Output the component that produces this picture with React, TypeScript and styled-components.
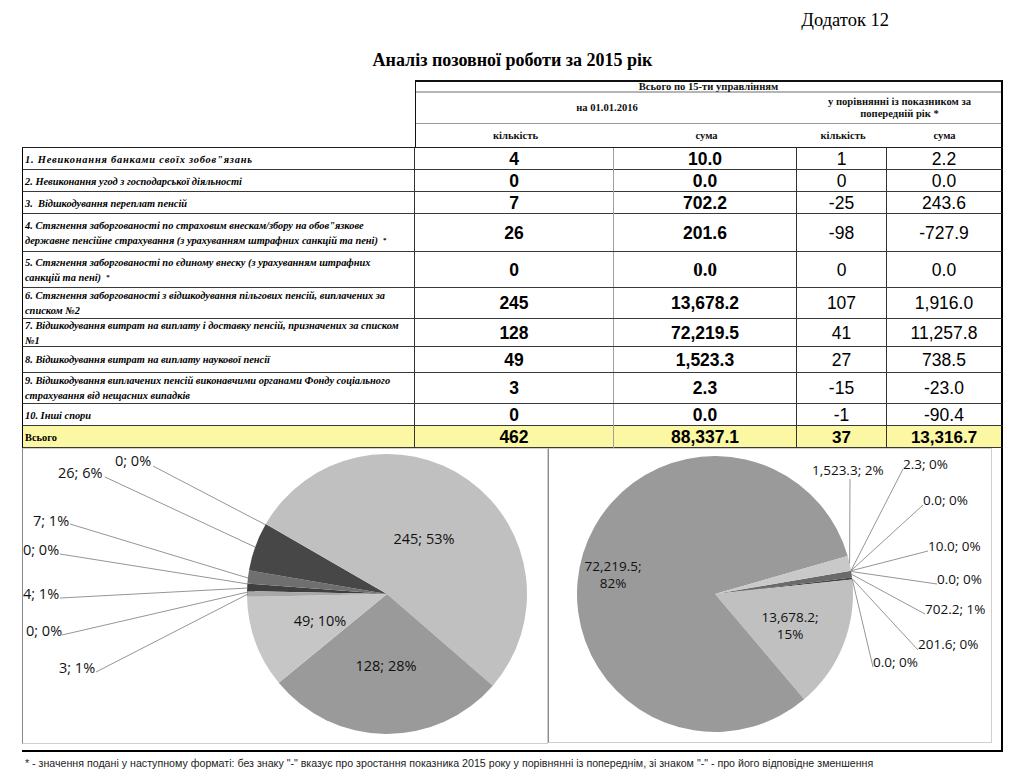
import React from 'react';
import styled, { createGlobalStyle } from 'styled-components';

const GlobalStyle = createGlobalStyle`
  html, body { margin: 0; padding: 0; background: #fff; }
  body { width: 1024px; height: 784px; overflow: hidden; }
`;

const COLS = '392px 199px 183px 90px 114px';

const Page = styled.div`
  width: 1024px;
  height: 784px;
  box-sizing: border-box;
  padding: 0 21px 0 22px;
  display: flex;
  flex-direction: column;
  font-family: "Liberation Serif", "Times New Roman", serif;
  color: #000;
`;

const Appendix = styled.div`
  display: flex;
  justify-content: flex-end;
  padding-right: 114px;
  margin-top: 10px;
  font-size: 18.5px;
  line-height: 20px;
  height: 20px;
`;

const Title = styled.h1`
  margin: 20px 0 0;
  text-align: center;
  font-size: 18px;
  line-height: 20px;
  height: 20px;
  font-weight: bold;
`;

const HeaderWrap = styled.div`
  margin-top: 10px;
  display: flex;
  height: 67px;
`;

const HeaderSpacer = styled.div`
  width: 393px;
  flex: none;
`;

const HeaderBox = styled.div`
  flex: 1;
  box-sizing: border-box;
  border-top: 2px solid #111;
  border-left: 1px solid #111;
  border-right: 2px solid #000;
  display: flex;
  flex-direction: column;
  font-weight: bold;
  font-size: 10.6px;
  color: #111;
`;

const HeadTop = styled.div`
  height: 11px;
  box-sizing: border-box;
  border-bottom: 2px solid #b5b5b5;
  display: flex;
  align-items: center;
  justify-content: center;
  line-height: 10px;
`;

const HeadGrid = styled.div<{ $h: number; $cols: string; $line?: boolean }>`
  height: ${(p) => p.$h}px;
  box-sizing: border-box;
  display: grid;
  grid-template-columns: ${(p) => p.$cols};
  border-bottom: ${(p) => (p.$line ? '1px solid #9a9a9a' : 'none')};
`;

const HeadCell = styled.div`
  display: flex;
  align-items: center;
  justify-content: center;
  text-align: center;
  line-height: 12px;
`;

const Body = styled.div`
  border-top: 1px solid #222;
  display: flex;
  flex-direction: column;
`;

const Row = styled.div<{ $h: number; $total?: boolean }>`
  display: grid;
  grid-template-columns: ${COLS};
  height: ${(p) => p.$h}px;
  box-sizing: border-box;
  border-left: 1px solid #000;
  border-right: 2px solid #000;
  border-bottom: 1px solid #3a3a3a;
  background: ${(p) => (p.$total ? '#fbf7a2' : '#fff')};
`;

const LabelCell = styled.div<{ $total?: boolean; $spread?: number }>`
  box-sizing: border-box;
  border-right: 1px solid #333;
  padding-left: 2px;
  display: flex;
  flex-direction: column;
  justify-content: center;
  font-weight: bold;
  font-style: ${(p) => (p.$total ? 'normal' : 'italic')};
  font-size: 10.4px;
  letter-spacing: ${(p) => p.$spread ?? 0}px;
  line-height: 15px;
  white-space: pre;
  overflow: hidden;
`;

const LabelLine = styled.span`
  display: block;
  align-self: flex-start;
`;

const NumCell = styled.div<{ $bold?: boolean; $size: number; $serif?: boolean; $line: string }>`
  box-sizing: border-box;
  border-right: ${(p) => p.$line};
  display: flex;
  align-items: center;
  justify-content: center;
  font-family: ${(p) =>
    p.$serif ? '"Liberation Serif", "Times New Roman", serif' : '"Liberation Sans", Arial, sans-serif'};
  font-weight: ${(p) => (p.$bold ? 'bold' : 'normal')};
  font-size: ${(p) => p.$size}px;
  padding-top: 1px;
`;

const Sup = styled.span`
  font-size: 7px;
  line-height: 7px;
  vertical-align: 2px;
  font-style: normal;
`;

const ChartsFrame = styled.div`
  display: flex;
  align-items: flex-start;
  height: 304px;
  box-sizing: border-box;
  border-right: 2px solid #000;
  border-bottom: 2px solid #000;
`;

const ChartBox = styled.div<{ $w: number; $h: number; $edge: string }>`
  width: ${(p) => p.$w}px;
  height: ${(p) => p.$h}px;
  flex: none;
  box-sizing: border-box;
  border: 1px solid #cfcfcf;
  border-left: 1px solid ${(p) => p.$edge};
  background: #fff;
  overflow: hidden;
  & > svg { display: block; }
`;

const Footer = styled.div`
  margin-top: 4px;
  padding-left: 3px;
  font-family: "Liberation Sans", Arial, sans-serif;
  font-size: 10.65px;
  line-height: 14px;
  color: #222;
  white-space: nowrap;
`;

type RowData = {
  lines: string[];
  star?: boolean;
  h: number;
  a: string;
  b: string;
  c: string;
  d: string;
  serifB?: boolean;
  total?: boolean;
  spread?: number;
};

const rows: RowData[] = [
  { lines: ['1. Невиконання банками своїх зобов"язань'], h: 22, a: '4', b: '10.0', c: '1', d: '2.2', spread: 0.8 },
  { lines: ['2. Невиконання угод з господарської діяльності'], h: 22, a: '0', b: '0.0', c: '0', d: '0.0' },
  { lines: ['3.  Відшкодування переплат пенсій'], h: 22, a: '7', b: '702.2', c: '-25', d: '243.6' },
  {
    lines: [
      '4. Стягнення заборгованості по страховим внескам/збору на обов"язкове',
      'державне пенсійне страхування (з урахуванням штрафних санкцій та пені)  ',
    ],
    star: true,
    h: 38,
    a: '26',
    b: '201.6',
    c: '-98',
    d: '-727.9',
  },
  {
    lines: ['5. Стягнення заборгованості по єдиному внеску (з урахуванням штрафних', 'санкцій та пені)  '],
    star: true,
    h: 36,
    a: '0',
    b: '0.0',
    c: '0',
    d: '0.0',
    serifB: true,
  },
  {
    lines: ['6. Стягнення заборгованості з відшкодування пільгових пенсій, виплачених за', 'списком №2'],
    h: 31,
    a: '245',
    b: '13,678.2',
    c: '107',
    d: '1,916.0',
  },
  {
    lines: ['7. Відшкодування витрат на виплату і доставку пенсій, призначених за списком', '№1'],
    h: 28,
    a: '128',
    b: '72,219.5',
    c: '41',
    d: '11,257.8',
  },
  { lines: ['8. Відшкодування витрат на виплату наукової пенсії'], h: 26, a: '49', b: '1,523.3', c: '27', d: '738.5' },
  {
    lines: ['9. Відшкодування виплачених пенсій виконавчими органами Фонду соціального', 'страхування від нещасних випадків'],
    h: 31,
    a: '3',
    b: '2.3',
    c: '-15',
    d: '-23.0',
  },
  { lines: ['10. Інші спори'], h: 22, a: '0', b: '0.0', c: '-1', d: '-90.4' },
  { lines: ['Всього'], h: 22, a: '462', b: '88,337.1', c: '37', d: '13,316.7', total: true },
];

/* ---------- pie charts ---------- */

const rad = (d: number) => (d * Math.PI) / 180;

function slicePath(cx: number, cy: number, r: number, a0: number, a1: number) {
  const x0 = cx + r * Math.cos(rad(a0));
  const y0 = cy + r * Math.sin(rad(a0));
  const x1 = cx + r * Math.cos(rad(a1));
  const y1 = cy + r * Math.sin(rad(a1));
  const large = a1 - a0 > 180 ? 1 : 0;
  return `M ${cx} ${cy} L ${x0.toFixed(2)} ${y0.toFixed(2)} A ${r} ${r} 0 ${large} 1 ${x1.toFixed(2)} ${y1.toFixed(2)} Z`;
}

type Label = { t: string[]; x: number; y: number; anchor?: 'start' | 'middle'; line?: [number, number, number, number] };

type PieProps = {
  w: number;
  h: number;
  ox: number;
  oy: number;
  cx: number;
  cy: number;
  r: number;
  start: number;
  values: number[];
  colors: string[];
  labels: Label[];
  fontSize: number;
};

const Pie: React.FC<PieProps> = ({ w, h, ox, oy, cx, cy, r, start, values, colors, labels, fontSize }) => {
  const total = values.reduce((s, v) => s + v, 0);
  let a = start;
  const slices = values.map((v, i) => {
    const sweep = (v / total) * 360;
    const a0 = a;
    a += sweep;
    if (v <= 0) return null;
    return <path key={i} d={slicePath(cx, cy, r, a0, a0 + sweep)} fill={colors[i]} />;
  });
  return (
    <svg width={w} height={h} viewBox={`${ox} ${oy} ${w} ${h}`}>
      {slices}
      {labels.map((l, i) =>
        l.line ? (
          <line key={'l' + i} x1={l.line[0]} y1={l.line[1]} x2={l.line[2]} y2={l.line[3]} stroke="#7a7a7a" strokeWidth={0.8} />
        ) : null
      )}
      {labels.map((l, i) => (
        <text
          key={'t' + i}
          x={l.x}
          y={l.y}
          textAnchor={l.anchor || 'start'}
          fontFamily='"Open Sans", "Noto Sans", sans-serif'
          fontSize={fontSize}
          fill="#111"
        >
          {l.t.map((s, j) => (
            <tspan key={j} x={l.x} y={l.y + j * 17} dominantBaseline="central">
              {s}
            </tspan>
          ))}
        </text>
      ))}
    </svg>
  );
};

const leftLabels: Label[] = [
  { t: ['245; 53%'], x: 424, y: 537, anchor: 'middle' },
  { t: ['49; 10%'], x: 320, y: 619, anchor: 'middle' },
  { t: ['128; 28%'], x: 386, y: 664, anchor: 'middle' },
  { t: ['0; 0%'], x: 115, y: 459, line: [153, 465, 266, 524] },
  { t: ['26; 6%'], x: 58, y: 471, line: [105, 476, 255, 546] },
  { t: ['7; 1%'], x: 33, y: 519, line: [70, 523, 248, 577] },
  { t: ['0; 0%'], x: 23, y: 548, line: [60, 553, 248, 583] },
  { t: ['4; 1%'], x: 23, y: 592, line: [60, 597, 248, 587] },
  { t: ['0; 0%'], x: 26, y: 629, line: [62, 634, 248, 591] },
  { t: ['3; 1%'], x: 59, y: 666, line: [96, 671, 248, 593] },
];

const rightLabels: Label[] = [
  { t: ['72,219.5;', '82%'], x: 613, y: 566, anchor: 'middle' },
  { t: ['13,678.2;', '15%'], x: 790, y: 617, anchor: 'middle' },
  { t: ['1,523.3; 2%'], x: 812, y: 470, line: [850, 479, 849.6, 563.4] },
  { t: ['2.3; 0%'], x: 903, y: 464, line: [903, 469, 851, 570.7] },
  { t: ['0.0; 0%'], x: 923, y: 500, line: [923, 505, 851, 570.7] },
  { t: ['10.0; 0%'], x: 928, y: 546, line: [928, 551, 851, 570.8] },
  { t: ['0.0; 0%'], x: 937, y: 579, line: [937, 584, 851.2, 571.5] },
  { t: ['702.2; 1%'], x: 925, y: 609, line: [925, 614, 851.6, 574.3] },
  { t: ['201.6; 0%'], x: 918, y: 644, line: [918, 650, 852.1, 578.6] },
  { t: ['0.0; 0%'], x: 873, y: 662, line: [873, 667, 852.3, 579.5] },
];

const App: React.FC = () => (
  <>
    <GlobalStyle />
    <Page>
      <Appendix>Додаток 12</Appendix>
      <Title>Аналіз позовної роботи за 2015 рік</Title>
      <HeaderWrap>
        <HeaderSpacer />
        <HeaderBox>
          <HeadTop>Всього по 15-ти управлінням</HeadTop>
          <HeadGrid $h={31} $cols="382px 1fr" $line>
            <HeadCell>на 01.01.2016</HeadCell>
            <HeadCell>
              у порівнянні із показником за
              <br />
              попередній рік *
            </HeadCell>
          </HeadGrid>
          <HeadGrid $h={23} $cols="199px 183px 90px 1fr">
            <HeadCell>кількість</HeadCell>
            <HeadCell>сума</HeadCell>
            <HeadCell>кількість</HeadCell>
            <HeadCell>сума</HeadCell>
          </HeadGrid>
        </HeaderBox>
      </HeaderWrap>
      <Body>
        {rows.map((r, i) => (
          <Row key={i} $h={r.h} $total={r.total}>
            <LabelCell $total={r.total} $spread={r.spread}>
              {r.lines.map((ln, j) => (
                <LabelLine key={j}>
                  {ln}
                  {r.star && j === r.lines.length - 1 ? <Sup>*</Sup> : null}
                </LabelLine>
              ))}
            </LabelCell>
            <NumCell $bold $size={17.5} $line="1px solid #a0a0a0">
              {r.a}
            </NumCell>
            <NumCell $bold $size={r.serifB ? 19 : 17.5} $serif={r.serifB} $line="1px solid #333">
              {r.b}
            </NumCell>
            <NumCell $bold={r.total} $size={r.total ? 17 : 17.5} $line="1px solid #333">
              {r.c}
            </NumCell>
            <NumCell $bold={r.total} $size={r.total ? 17 : 17.5} $line="none">
              {r.d}
            </NumCell>
          </Row>
        ))}
      </Body>
      <ChartsFrame>
        <ChartBox $w={526} $h={296} $edge="#8a8a8a">
          <Pie
            w={524}
            h={295}
            ox={23}
            oy={448}
            cx={387}
            cy={593}
            r={140}
            start={181.17}
            values={[4, 0, 7, 26, 0, 245, 128, 49, 3, 0]}
            colors={['#3f3f3f', '#555', '#6f6f6f', '#474747', '#888', '#c0c0c0', '#9a9a9a', '#c6c6c6', '#a8a8a8', '#bbb']}
            labels={leftLabels}
            fontSize={14.5}
          />
        </ChartBox>
        <ChartBox $w={444} $h={295} $edge="#8a8a8a">
          <Pie
            w={442}
            h={293}
            ox={549}
            oy={449}
            cx={715}
            cy={594}
            r={138}
            start={350.28}
            values={[10, 0, 702.2, 201.6, 0, 13678.2, 72219.5, 1523.3, 2.3, 0]}
            colors={['#404040', '#555', '#6a6a6a', '#454545', '#888', '#c0c0c0', '#9a9a9a', '#c9c9c9', '#aaa', '#bbb']}
            labels={rightLabels}
            fontSize={13.5}
          />
        </ChartBox>
      </ChartsFrame>
      <Footer>
        * - значення подані у наступному форматі: без знаку "-" вказує про зростання показника 2015 року у порівнянні із
        попереднім, зі знаком "-" - про його відповідне зменшення
      </Footer>
    </Page>
  </>
);

export default App;
